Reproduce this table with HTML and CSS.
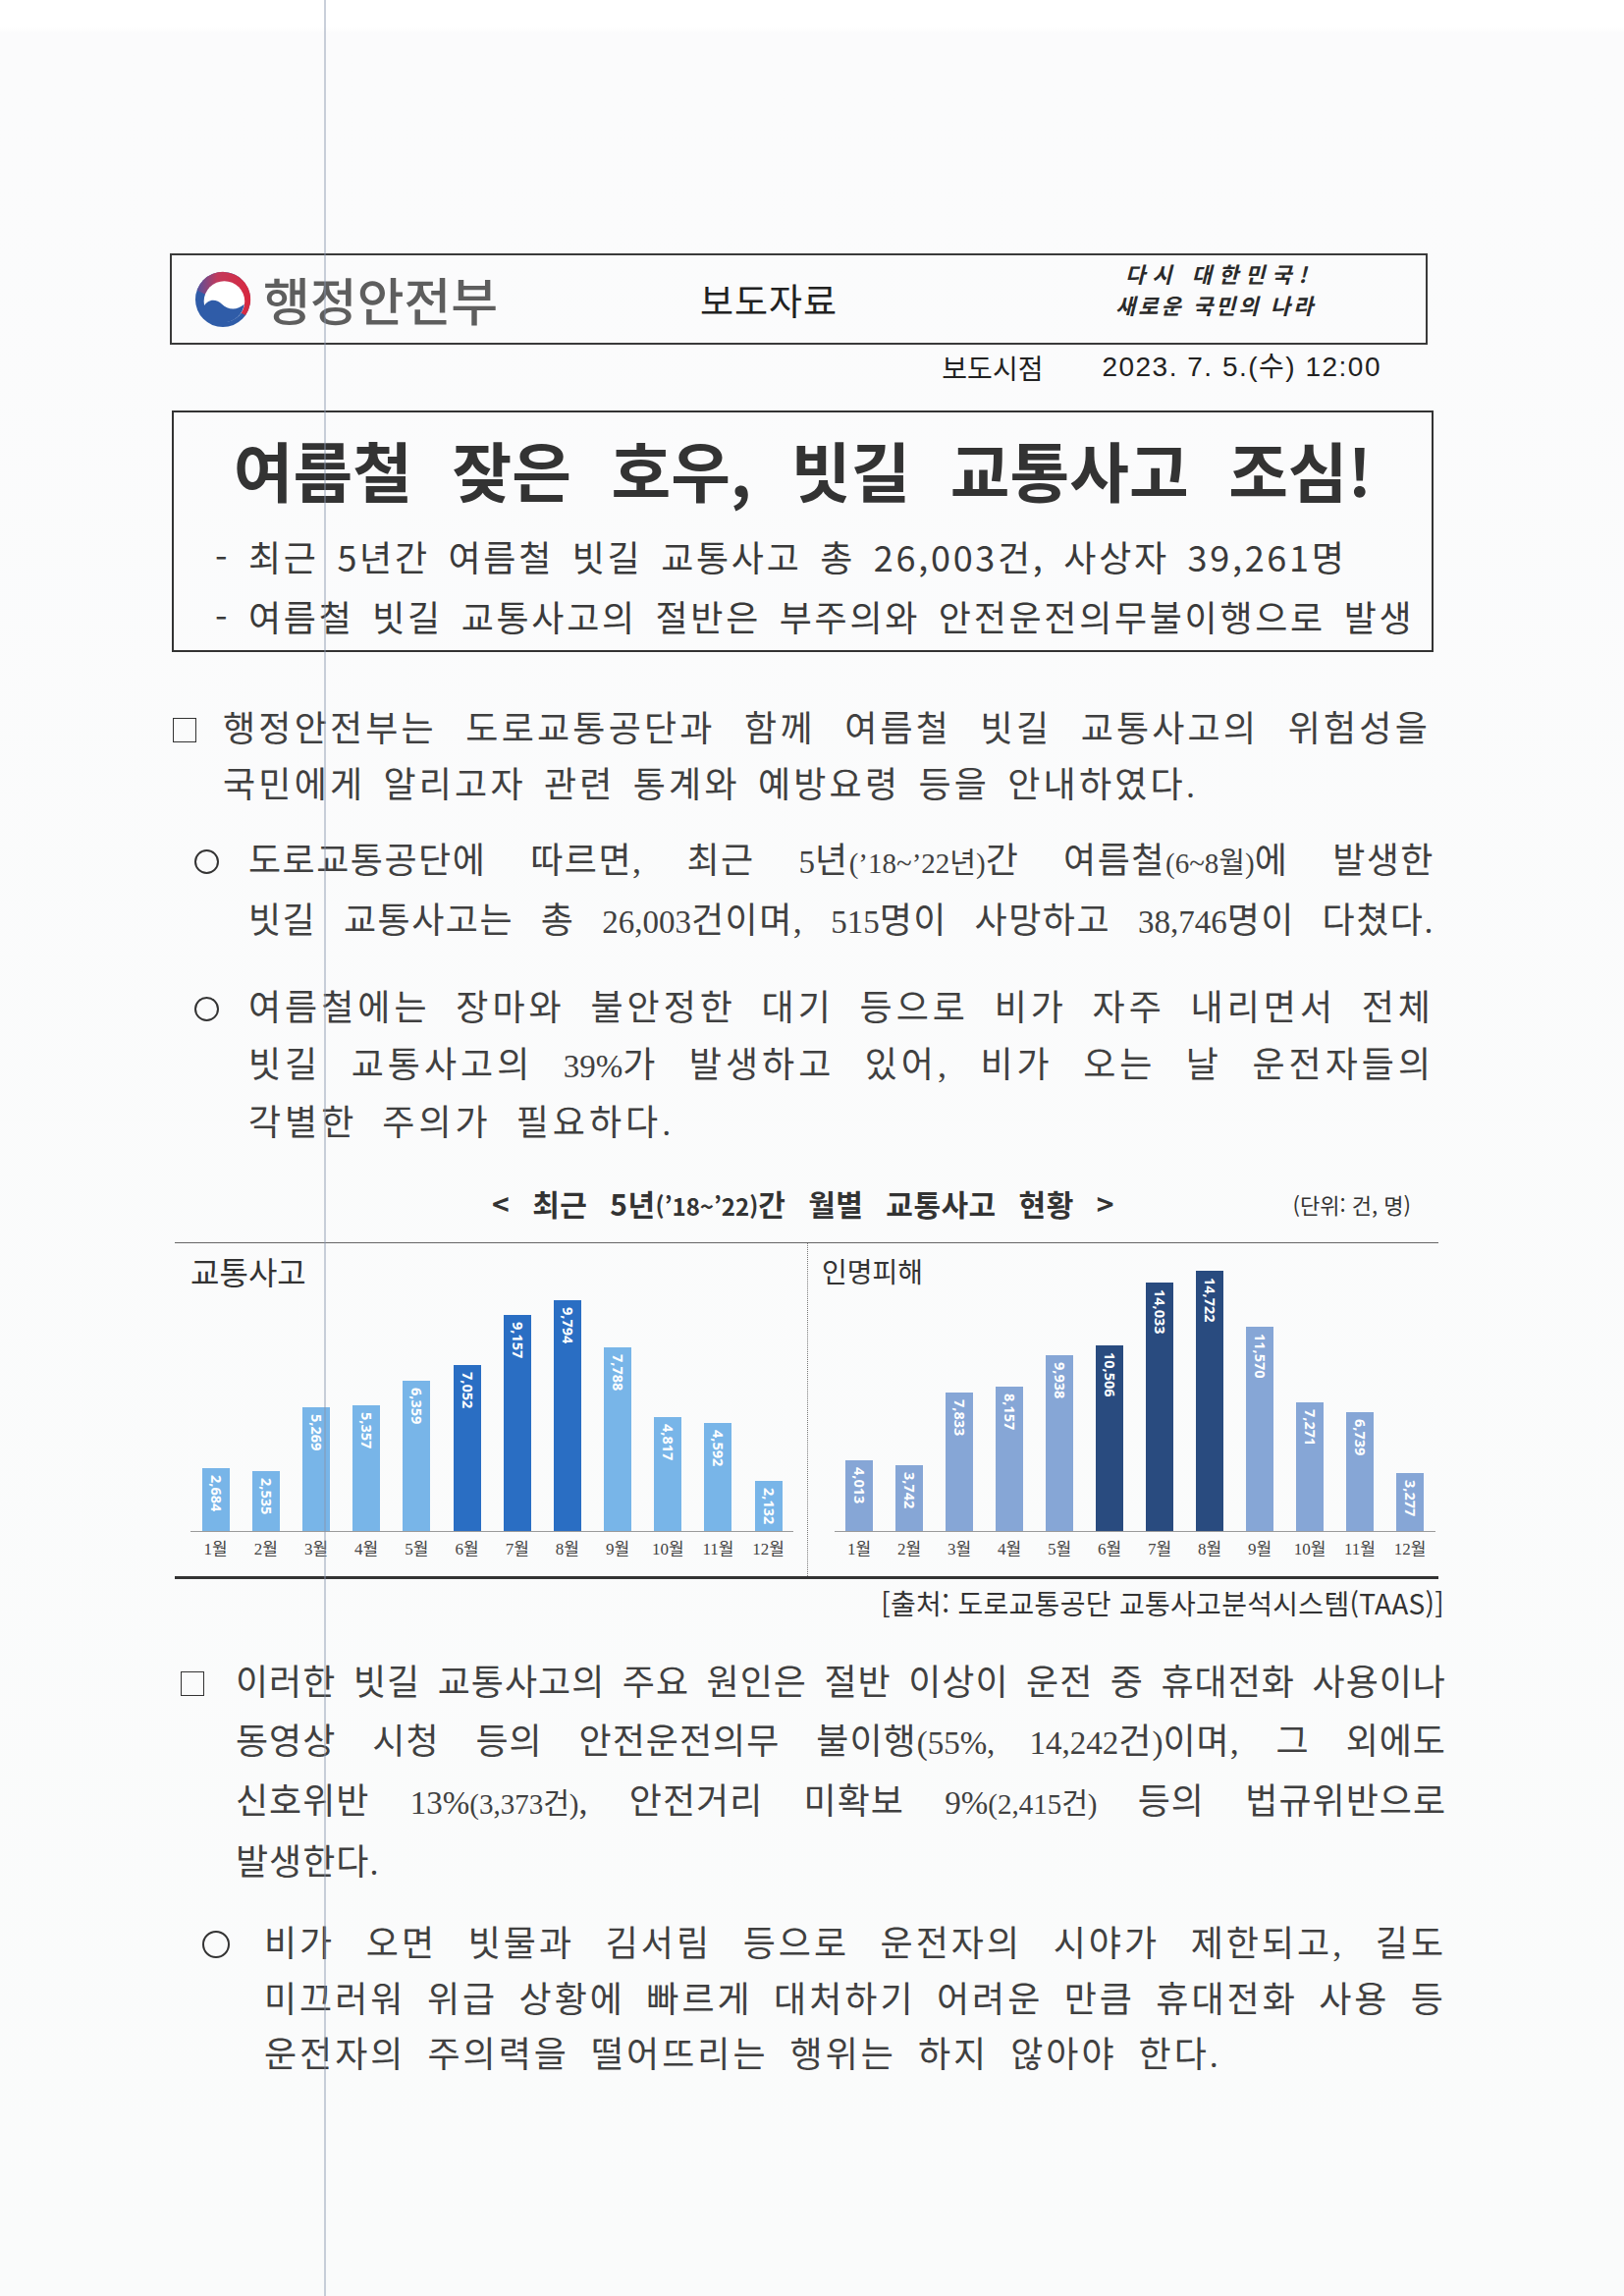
FILE: index.html
```html
<!DOCTYPE html>
<html lang="ko">
<head>
<meta charset="utf-8">
<title>보도자료 - 여름철 잦은 호우, 빗길 교통사고 조심!</title>
<link rel="stylesheet" href="styles.css">
</head>
<body>
<div class="page">
  <div class="doc">
    <header class="masthead">
      <div class="brand">
        <svg class="emblem" viewBox="0 0 60 60" aria-hidden="true">
          <defs>
            <linearGradient id="redg" x1="0" y1="0.5" x2="1" y2="0.5">
              <stop offset="0" stop-color="#55519d"/>
              <stop offset="0.38" stop-color="#c2395b"/>
              <stop offset="1" stop-color="#d8283f"/>
            </linearGradient>
          </defs>
          <circle cx="30" cy="30" r="29" fill="#2f5ca8"/>
          <path d="M2.8 20.1 A29 29 0 1 1 53.8 46.6 Z" fill="url(#redg)"/>
          <circle cx="31.5" cy="32" r="21.5" fill="#fff"/>
          <path d="M9.5 38 C14 29 23 29 29 35 C35 41 45 42 52.5 35 A22 22 0 0 1 9.5 38 Z" fill="#2f5ca8"/>
        </svg>
        <span class="ministry">행정안전부</span>
      </div>
      <div class="kind">보도자료</div>
      <div class="slogan"><span class="sl1">다시 대한민국!</span><span class="sl2">새로운 국민의 나라</span></div>
    </header>

    <div class="release"><span class="rl-label">보도시점</span><span class="rl-date">2023. 7. 5.(수) 12:00</span></div>

    <section class="headline">
      <h1>여름철 잦은 호우, 빗길 교통사고 조심!</h1>
      <ul class="subs">
        <li>- 최근 5년간 여름철 빗길 교통사고 총 26,003건, 사상자 39,261명</li>
        <li>- 여름철 빗길 교통사고의 절반은 부주의와 안전운전의무불이행으로 발생</li>
      </ul>
    </section>

    <div class="item p1">
      <div class="mk"><span class="sq"></span></div>
      <div class="tx">
        <span class="ln j">행정안전부는 도로교통공단과 함께 여름철 빗길 교통사고의 위험성을</span>
        <span class="ln">국민에게 알리고자 관련 통계와 예방요령 등을 안내하였다.</span>
      </div>
    </div>

    <div class="item p2">
      <div class="mk"><span class="ci"></span></div>
      <div class="tx">
        <span class="ln j">도로교통공단에 따르면, 최근 <span class="num">5</span>년<span class="sm">(’18~’22년)</span>간 여름철<span class="sm">(6~8월)</span>에 발생한</span>
        <span class="ln j">빗길 교통사고는 총 <span class="num">26,003</span>건이며, <span class="num">515</span>명이 사망하고 <span class="num">38,746</span>명이 다쳤다.</span>
      </div>
    </div>

    <div class="item p3">
      <div class="mk"><span class="ci"></span></div>
      <div class="tx">
        <span class="ln j">여름철에는 장마와 불안정한 대기 등으로 비가 자주 내리면서 전체</span>
        <span class="ln j">빗길 교통사고의 <span class="num">39%</span>가 발생하고 있어, 비가 오는 날 운전자들의</span>
        <span class="ln">각별한 주의가 필요하다.</span>
      </div>
    </div>

    <div class="chart-head">
      <div class="chart-title">&lt; 최근 5년<span class="yrs">(’18~’22)</span>간 월별 교통사고 현황 &gt;</div>
      <div class="unit">(단위: 건, 명)</div>
    </div>

    <div class="charts">
      <div class="panel accidents">
        <div class="panel-label">교통사고</div>
        <div class="bars">
          <div class="bar" style="height:64.4px"><span>2,684</span></div>
          <div class="bar" style="height:60.8px"><span>2,535</span></div>
          <div class="bar" style="height:126.4px"><span>5,269</span></div>
          <div class="bar" style="height:128.5px"><span>5,357</span></div>
          <div class="bar" style="height:152.6px"><span>6,359</span></div>
          <div class="bar hot" style="height:169.2px"><span>7,052</span></div>
          <div class="bar hot" style="height:219.7px"><span>9,157</span></div>
          <div class="bar hot" style="height:235px"><span>9,794</span></div>
          <div class="bar" style="height:186.9px"><span>7,788</span></div>
          <div class="bar" style="height:115.6px"><span>4,817</span></div>
          <div class="bar" style="height:110.2px"><span>4,592</span></div>
          <div class="bar" style="height:51.2px"><span>2,132</span></div>
        </div>
        <div class="months">
          <span>1월</span><span>2월</span><span>3월</span><span>4월</span><span>5월</span><span>6월</span>
          <span>7월</span><span>8월</span><span>9월</span><span>10월</span><span>11월</span><span>12월</span>
        </div>
      </div>
      <div class="panel injury">
        <div class="panel-label">인명피해</div>
        <div class="bars">
          <div class="bar" style="height:72.2px"><span>4,013</span></div>
          <div class="bar" style="height:67.4px"><span>3,742</span></div>
          <div class="bar" style="height:141px"><span>7,833</span></div>
          <div class="bar" style="height:146.8px"><span>8,157</span></div>
          <div class="bar" style="height:178.9px"><span>9,938</span></div>
          <div class="bar hot" style="height:189.1px"><span>10,506</span></div>
          <div class="bar hot" style="height:252.6px"><span>14,033</span></div>
          <div class="bar hot" style="height:265px"><span>14,722</span></div>
          <div class="bar" style="height:208.3px"><span>11,570</span></div>
          <div class="bar" style="height:130.9px"><span>7,271</span></div>
          <div class="bar" style="height:121.3px"><span>6,739</span></div>
          <div class="bar" style="height:59px"><span>3,277</span></div>
        </div>
        <div class="months">
          <span>1월</span><span>2월</span><span>3월</span><span>4월</span><span>5월</span><span>6월</span>
          <span>7월</span><span>8월</span><span>9월</span><span>10월</span><span>11월</span><span>12월</span>
        </div>
      </div>
    </div>

    <div class="source">[출처: 도로교통공단 교통사고분석시스템(TAAS)]</div>

    <div class="item p4">
      <div class="mk"><span class="sq"></span></div>
      <div class="tx">
        <span class="ln j">이러한 빗길 교통사고의 주요 원인은 절반 이상이 운전 중 휴대전화 사용이나</span>
        <span class="ln j">동영상 시청 등의 안전운전의무 불이행<span class="num">(55%, 14,242</span>건<span class="num">)</span>이며, 그 외에도</span>
        <span class="ln j">신호위반 <span class="num">13%</span><span class="sm">(3,373건)</span>, 안전거리 미확보 <span class="num">9%</span><span class="sm">(2,415건)</span> 등의 법규위반으로</span>
        <span class="ln">발생한다.</span>
      </div>
    </div>

    <div class="item p5">
      <div class="mk"><span class="ci"></span></div>
      <div class="tx">
        <span class="ln j">비가 오면 빗물과 김서림 등으로 운전자의 시야가 제한되고, 길도</span>
        <span class="ln j">미끄러워 위급 상황에 빠르게 대처하기 어려운 만큼 휴대전화 사용 등</span>
        <span class="ln">운전자의 주의력을 떨어뜨리는 행위는 하지 않아야 한다.</span>
      </div>
    </div>
  </div>
  <div class="scanline"></div>
</div>
</body>
</html>
```

FILE: styles.css
```css
html, body {
  margin: 0;
  padding: 0;
}

body {
  background: #ffffff;
  font-family: "Noto Sans CJK KR", sans-serif;
  color: #333333;
}

.page {
  position: relative;
  width: 1654px;
  min-height: 2338px;
  background: linear-gradient(#ffffff 0, #ffffff 28px, #fbfbfc 34px, #fafbfb 100%);
  overflow: hidden;
}

.scanline {
  position: absolute;
  left: 330px;
  top: 0;
  bottom: 0;
  width: 1.5px;
  background: rgba(135, 148, 172, 0.45);
}

.doc {
  padding: 258px 0 0 173px;
  width: 1310px;
}

/* ---------- masthead ---------- */
.masthead {
  box-sizing: border-box;
  width: 1281px;
  height: 93px;
  border: 2px solid #3a3a3a;
  display: grid;
  grid-template-columns: 538px 260px 1fr;
  align-items: center;
}

.brand {
  display: flex;
  align-items: center;
  gap: 12px;
  padding-left: 23px;
}

.emblem {
  width: 58px;
  height: 58px;
  flex: none;
}

.ministry {
  font-size: 52px;
  font-weight: 500;
  line-height: 1;
  color: #5e5e5e;
}

.kind {
  font-size: 37px;
  letter-spacing: 1px;
  color: #222222;
}

.slogan {
  align-self: start;
  display: flex;
  flex-direction: column;
  padding: 2px 0 0 163px;
  font-size: 22px;
  font-weight: 700;
  font-style: italic;
  line-height: 32px;
  color: #2a2a2a;
}

.sl1 {
  padding-left: 10px;
  letter-spacing: 7px;
}

.sl2 {
  letter-spacing: 3px;
}

/* ---------- release time ---------- */
.release {
  box-sizing: border-box;
  width: 1290px;
  margin-top: 8px;
  padding-right: 56px;
  display: flex;
  justify-content: flex-end;
  font-size: 28px;
  line-height: 30px;
  color: #222222;
}

.rl-date {
  margin-left: 60px;
  font-family: "Liberation Sans", "Noto Sans CJK KR", sans-serif;
  letter-spacing: 1.5px;
}

/* ---------- headline box ---------- */
.headline {
  box-sizing: border-box;
  width: 1285px;
  height: 246px;
  margin: 29px 0 0 2px;
  padding-top: 17px;
  border: 2px solid #333333;
}

.headline h1 {
  margin: 0;
  text-align: center;
  font-size: 66px;
  line-height: 80px;
  font-weight: 700;
  word-spacing: 22px;
  color: #333333;
}

.subs {
  list-style: none;
  margin: 19px 0 0;
  padding: 0 0 0 42px;
  font-size: 36px;
  line-height: 61px;
  letter-spacing: 2.7px;
  word-spacing: 6px;
  color: #3a3a3a;
}

/* ---------- body paragraphs ---------- */
.item {
  display: flex;
  font-family: "Liberation Serif", "Noto Sans CJK KR", serif;
  font-size: 36px;
  color: #404040;
}

.mk {
  flex: none;
  display: flex;
  align-items: center;
}

.tx {
  flex: 1;
  min-width: 0;
}

.ln {
  display: block;
  white-space: nowrap;
}

.ln.j {
  text-align: justify;
  text-align-last: justify;
  word-spacing: 0;
}

.num {
  font-size: 33px;
  letter-spacing: 0;
}

.sm {
  font-size: 29px;
  letter-spacing: 0;
}

.sq {
  display: block;
  box-sizing: border-box;
  width: 24px;
  height: 25px;
  border: 1.5px solid #333333;
}

.ci {
  display: block;
  box-sizing: border-box;
  width: 25px;
  height: 25px;
  border: 2px solid #333333;
  border-radius: 50%;
}

.p1 {
  width: 1284px;
  margin-top: 50.5px;
  line-height: 57px;
  letter-spacing: 3.2px;
  word-spacing: 6px;
}
.p1 .mk { width: 54px; height: 57px; }
.p1 .sq { margin-left: 3px; }

.p2 {
  width: 1288px;
  margin-top: 19.5px;
  line-height: 59px;
  letter-spacing: 1.5px;
}
.p2 .mk { width: 80px; height: 59px; }
.p2 .ci { margin-left: 25px; }

.p3 {
  width: 1288px;
  margin-top: 29px;
  line-height: 58px;
  letter-spacing: 4px;
  word-spacing: 12px;
}
.p3 .mk { width: 80px; height: 58px; }
.p3 .ci { margin-left: 25px; }

.p4 {
  width: 1300px;
  margin-top: 35px;
  line-height: 60px;
  letter-spacing: 1px;
  word-spacing: 6px;
}
.p4 .mk { width: 67px; height: 60px; }
.p4 .sq { margin-left: 11px; }

.p5 {
  width: 1300px;
  margin-top: 25px;
  line-height: 56.5px;
  letter-spacing: 3px;
  word-spacing: 10px;
}
.p5 .mk { width: 96px; height: 56.5px; }
.p5 .ci { margin-left: 33px; width: 28px; height: 28px; }

/* ---------- chart ---------- */
.chart-head {
  width: 1290px;
  margin-top: 33.5px;
  display: grid;
  grid-template-columns: 1fr auto 1fr;
  align-items: center;
  line-height: 36px;
}

.chart-title {
  grid-column: 2;
  font-size: 30px;
  font-weight: 700;
  letter-spacing: 0.5px;
  word-spacing: 14px;
  color: #333333;
}

.yrs {
  font-size: 24px;
  letter-spacing: 0;
  word-spacing: 0;
}

.unit {
  justify-self: end;
  margin-right: 26px;
  font-size: 22px;
  color: #333333;
}

.charts {
  width: 1287px;
  margin: 19.5px 0 0 5px;
  display: grid;
  grid-template-columns: 644px 643px;
  border-top: 1px solid #666666;
  border-bottom: 3px solid #333333;
}

.panel {
  display: grid;
  grid-template-rows: 294px 45px;
  grid-template-columns: 1fr;
}

.panel.injury {
  border-left: 1px dotted #777777;
}

.panel-label {
  grid-area: 1 / 1;
  align-self: start;
  justify-self: start;
  margin: 10px 0 0 16px;
  font-size: 32px;
  line-height: 36px;
  color: #333333;
}

.injury .panel-label {
  margin: 10px 0 0 14px;
  font-size: 28px;
}

.bars {
  grid-area: 1 / 1;
  align-self: end;
  justify-self: start;
  display: grid;
  grid-template-columns: repeat(12, 51.2px);
  align-items: end;
  margin-left: 16px;
  border-bottom: 1px solid #9a9a9a;
}

.injury .bars {
  grid-template-columns: repeat(12, 51px);
  margin-left: 26.5px;
}

.bar {
  justify-self: center;
  width: 28px;
  background: #78b5e8;
  display: flex;
  justify-content: center;
}

.bar.hot {
  background: #2a6ec3;
}

.injury .bar {
  background: #86a6d6;
}

.injury .bar.hot {
  background: #294b7f;
}

.bar span {
  writing-mode: vertical-rl;
  padding-top: 7px;
  font-family: "Open Sans", "Liberation Sans", sans-serif;
  font-size: 14.5px;
  font-weight: 700;
  line-height: 28px;
  color: #ffffff;
}

.months {
  grid-row: 2;
  align-self: start;
  display: grid;
  grid-template-columns: repeat(12, 51.2px);
  margin-left: 16px;
  font-family: "Liberation Serif", "Noto Sans CJK KR", serif;
  font-size: 17px;
  line-height: 36px;
  text-align: center;
  color: #444444;
}

.injury .months {
  grid-template-columns: repeat(12, 51px);
  margin-left: 26.5px;
}

.source {
  width: 1298px;
  margin-top: 7px;
  text-align: right;
  font-size: 28px;
  line-height: 34px;
  letter-spacing: 0.3px;
  color: #333333;
}
```
